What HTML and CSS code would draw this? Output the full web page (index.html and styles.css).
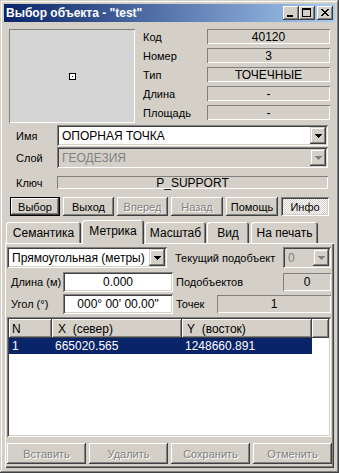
FILE: index.html
```html
<!DOCTYPE html>
<html lang="ru">
<head>
    <meta charset="UTF-8">
    <title>Выбор объекта</title>
    <link rel="stylesheet" href="styles.css">
</head>
<body>
    <div class="window">
        <div class="titlebar">
            <span class="title">Выбор объекта - "test"</span>
            <div class="caption-btns">
                <span class="cbtn"><svg width="16" height="14"><path d="M4 9h6v2h-6z"/></svg></span>
                <span class="cbtn"><svg width="16" height="14"><path d="M3 2h9v2h-9zM3 4h1v7h-1zM11 4h1v7h-1zM3 10h9v1h-9z"/></svg></span>
                <span class="cbtn close"><svg width="16" height="14"><path d="M4 3h2v1h-2zM10 3h2v1h-2zM5 4h2v1h-2zM9 4h2v1h-2zM6 5h4v1h-4zM7 6h2v1h-2zM6 7h4v1h-4zM5 8h2v1h-2zM9 8h2v1h-2zM4 9h2v1h-2zM10 9h2v1h-2z"/></svg></span>
            </div>
        </div>

        <div class="top">
            <div class="preview">
                <svg width="7" height="7"><rect width="7" height="7" fill="#fff"/><path d="M0 0h7v7h-7zM1 1v5h5v-5z" fill-rule="evenodd"/><rect x="3" y="3" width="1" height="1"/></svg>
            </div>
            <div class="props">
                <span class="lbl">Код</span><span class="val">40120</span>
                <span class="lbl">Номер</span><span class="val">3</span>
                <span class="lbl">Тип</span><span class="val">ТОЧЕЧНЫЕ</span>
                <span class="lbl">Длина</span><span class="val">-</span>
                <span class="lbl">Площадь</span><span class="val">-</span>
            </div>
        </div>

        <div class="fields">
            <span class="lbl">Имя</span>
            <div class="combo">
                <span class="combo-text">ОПОРНАЯ ТОЧКА</span>
                <span class="drop"><svg width="7" height="4"><path d="M0 0h7v1h-7zM1 1h5v1h-5zM2 2h3v1h-3zM3 3h1v1h-1z"/></svg></span>
            </div>
            <span class="lbl">Слой</span>
            <div class="combo disabled layer">
                <span class="combo-text">ГЕОДЕЗИЯ</span>
                <span class="drop"><svg width="7" height="4"><path d="M0 0h7v1h-7zM1 1h5v1h-5zM2 2h3v1h-3zM3 3h1v1h-1z"/></svg></span>
            </div>
            <span class="lbl key-lbl">Ключ</span>
            <span class="val key">P_SUPPORT</span>
        </div>

        <div class="buttons">
            <button class="btn default w50">Выбор</button>
            <button class="btn w51">Выход</button>
            <button class="btn off w51">Вперед</button>
            <button class="btn off w52">Назад</button>
            <button class="btn w52">Помощь</button>
            <button class="btn pressed w48">Инфо</button>
        </div>

        <div class="tabs">
            <span class="tab t1">Семантика</span>
            <span class="tab t2 active">Метрика</span>
            <span class="tab t3">Масштаб</span>
            <span class="tab t4">Вид</span>
            <span class="tab t5">На печать</span>
        </div>

        <div class="panel">
            <div class="row r1">
                <div class="combo sys">
                    <span class="combo-text">Прямоугольная (метры)</span>
                    <span class="drop"><svg width="7" height="4"><path d="M0 0h7v1h-7zM1 1h5v1h-5zM2 2h3v1h-3zM3 3h1v1h-1z"/></svg></span>
                </div>
                <span class="lbl side">Текущий подобъект</span>
                <div class="combo disabled small">
                    <span class="combo-text">0</span>
                    <span class="drop"><svg width="7" height="4"><path d="M0 0h7v1h-7zM1 1h5v1h-5zM2 2h3v1h-3zM3 3h1v1h-1z"/></svg></span>
                </div>
            </div>
            <div class="row r2">
                <span class="lbl left">Длина (м)</span>
                <span class="input">0.000</span>
                <span class="lbl side">Подобъектов</span>
                <span class="val box w48">0</span>
            </div>
            <div class="row r3">
                <span class="lbl left">Угол (°)</span>
                <span class="input">000° 00' 00.00"</span>
                <span class="lbl side">Точек</span>
                <span class="val box w114">1</span>
            </div>

            <div class="table">
                <div class="thead">
                    <span class="th c1">N</span>
                    <span class="th c2">X&nbsp;&nbsp;(север)</span>
                    <span class="th c3">Y&nbsp;&nbsp;(восток)</span>
                    <span class="th c4"></span>
                </div>
                <div class="tr selected">
                    <span class="td c1">1</span>
                    <span class="td c2">665020.565</span>
                    <span class="td c3">1248660.891</span>
                </div>
            </div>

            <div class="actions">
                <button class="btn off">Вставить</button>
                <button class="btn off">Удалить</button>
                <button class="btn off">Сохранить</button>
                <button class="btn off">Отменить</button>
            </div>
        </div>
    </div>
</body>
</html>
```

FILE: styles.css
```css
* {
    box-sizing: border-box;
}
body {
    margin: 0;
    background: #fff;
    font-family: "Liberation Sans", Arial, sans-serif;
    font-size: 11px;
    color: #000;
}
.window {
    width: 339px;
    height: 473px;
    background: #d4d0c8;
    padding: 4px 4px 5px 4px;
    display: flex;
    flex-direction: column;
    box-shadow: inset -1px -1px #404040, inset 1px 1px #d4d0c8, inset -2px -2px #808080, inset 2px 2px #fff;
}

/* title bar */
.titlebar {
    height: 18px;
    flex: none;
    display: flex;
    align-items: center;
    justify-content: space-between;
    padding: 0 2px 0 2px;
    background: linear-gradient(to right, #0a246a, #a6caf0);
}
.title {
    color: #fff;
    font-weight: bold;
    font-size: 12px;
}
.caption-btns {
    display: flex;
}
.cbtn {
    width: 16px;
    height: 14px;
    display: block;
    background: #d4d0c8;
    box-shadow: inset -1px -1px #404040, inset 1px 1px #fff, inset -2px -2px #808080;
}
.cbtn svg {
    display: block;
}
.cbtn.close {
    margin-left: 2px;
}

/* common 3d pieces */
.lbl {
    display: flex;
    align-items: center;
    white-space: nowrap;
}
.val {
    display: flex;
    align-items: center;
    justify-content: center;
    font-size: 12px;
    box-shadow: inset 1px 1px #808080, inset -1px -1px #fff;
}
.combo {
    height: 21px;
    display: flex;
    align-items: center;
    background: #fff;
    padding: 2px;
    font-size: 12px;
    box-shadow: inset 1px 1px #808080, inset -1px -1px #fff, inset 2px 2px #404040, inset -2px -2px #d4d0c8;
}
.combo-text {
    flex: 1;
    padding-left: 3px;
    white-space: nowrap;
    overflow: hidden;
}
.drop {
    width: 16px;
    height: 17px;
    display: flex;
    align-items: center;
    justify-content: center;
    background: #d4d0c8;
    box-shadow: inset -1px -1px #404040, inset 1px 1px #d4d0c8, inset -2px -2px #808080, inset 2px 2px #fff;
}
.drop svg {
    display: block;
}
.combo.disabled {
    background: #d4d0c8;
    color: #808080;
}
.combo.disabled .drop svg {
    fill: #808080;
}
.btn {
    height: 19px;
    padding: 0;
    border: none;
    background: #d4d0c8;
    font-family: "Liberation Sans", Arial, sans-serif;
    font-size: 11px;
    color: #000;
    box-shadow: inset -1px -1px #404040, inset 1px 1px #fff, inset -2px -2px #808080;
}
.btn.default {
    box-shadow: inset 0 0 0 1px #000, inset -2px -2px #404040, inset 2px 2px #fff, inset -3px -3px #808080;
}
.btn.off {
    color: #808080;
    text-shadow: 1px 1px #fff;
}
.btn.pressed {
    background-color: #d4d0c8;
    background-image: repeating-conic-gradient(#fff 0 25%, #d4d0c8 0 50%);
    background-size: 2px 2px;
    box-shadow: inset 1px 1px #808080, inset -1px -1px #fff, inset 2px 2px #404040, inset -2px -2px #d4d0c8;
}

/* top block */
.top {
    display: flex;
    margin-top: 7px;
    padding-left: 5px;
    height: 94px;
    flex: none;
}
.preview {
    width: 126px;
    height: 94px;
    background: #d4d4d4;
    display: flex;
    align-items: center;
    justify-content: center;
    box-shadow: inset 1px 1px #808080, inset -1px -1px #fff;
}
.props {
    margin-left: 8px;
    display: grid;
    grid-template-columns: 64px 123px;
    grid-template-rows: repeat(5, 15px);
    row-gap: 4px;
}

/* name / layer / key */
.fields {
    margin-top: 2px;
    padding-left: 12px;
    display: grid;
    grid-template-columns: 41px 271px;
    grid-template-rows: 21px 21px 20px;
    row-gap: 1px;
    flex: none;
}
.key-lbl, .key {
    margin-top: 7px;
    height: 13px;
}

.buttons {
    margin-top: 8px;
    padding-left: 6px;
    display: flex;
    gap: 3px;
    flex: none;
}
.w50 { width: 50px; }
.w51 { width: 51px; }
.w52 { width: 52px; }
.w48 { width: 48px; }

/* tabs */
.tabs {
    margin-top: 4px;
    height: 23px;
    padding-left: 2px;
    display: flex;
    align-items: flex-end;
    flex: none;
    position: relative;
    z-index: 1;
}
.tab {
    height: 21px;
    display: flex;
    align-items: center;
    justify-content: center;
    font-size: 12px;
    background: #d4d0c8;
    border-radius: 3px 3px 0 0;
    box-shadow: inset 1px 1px #fff, inset -1px 0 #404040, inset -2px 0 #808080;
    margin-right: 1px;
}
.tab.active {
    height: 24px;
    margin-bottom: -1px;
    padding-bottom: 2px;
}
.t1 { width: 75px; }
.t2 { width: 62px; }
.t3 { width: 61px; }
.t4 { width: 42px; margin-right: 2px; }
.t5 { width: 67px; }

/* panel */
.panel {
    flex: 1;
    margin: 0 1px;
    padding: 4px 2px 3px 2px;
    display: flex;
    flex-direction: column;
    box-shadow: inset 1px 1px #fff, inset -1px -1px #404040, inset -2px -2px #808080;
}
.row {
    display: flex;
    align-items: center;
    padding-right: 1px;
}
.r1 {
    height: 21px;
}
.r2 {
    height: 20px;
    margin-top: 4px;
}
.r3 {
    height: 20px;
    margin-top: 2px;
}
.combo.sys {
    width: 160px;
}
.combo.small {
    width: 48px;
}
.lbl.side {
    flex: 1;
    margin-left: 8px;
    height: 100%;
}
.r2 .lbl.side, .r3 .lbl.side {
    margin-left: 3px;
}
.lbl.left {
    width: 56px;
    padding-left: 4px;
    height: 100%;
}
.input {
    width: 110px;
    height: 20px;
    display: flex;
    align-items: center;
    justify-content: center;
    background: #fff;
    font-size: 12px;
    box-shadow: inset 1px 1px #808080, inset -1px -1px #fff, inset 2px 2px #404040, inset -2px -2px #d4d0c8;
}
.box {
    height: 18px;
}
.w114 { width: 114px; }

/* table */
.table {
    margin-top: 3px;
    width: 324px;
    height: 120px;
    padding: 2px;
    background: #fff;
    font-size: 12px;
    box-shadow: inset 1px 1px #808080, inset -1px -1px #fff, inset 2px 2px #404040, inset -2px -2px #d4d0c8;
}
.thead, .tr {
    display: flex;
}
.th {
    height: 19px;
    display: flex;
    align-items: center;
    padding-left: 3px;
    background: #d4d0c8;
    box-shadow: inset -1px -1px #404040, inset 1px 1px #fff, inset -2px -2px #808080;
}
.c1 { width: 43px; }
.c2 { width: 130px; padding-left: 6px; }
.c3 { width: 130px; padding-left: 5px; }
.c4 { flex: 1; }
.td {
    height: 16px;
    display: flex;
    align-items: center;
    padding-left: 3px;
}
.tr.selected {
    width: 303px;
    background: #0a246a;
    color: #fff;
}

.actions {
    margin-top: 6px;
    display: flex;
    gap: 3px;
}
.actions .btn {
    flex: 1;
    height: 21px;
}
```
